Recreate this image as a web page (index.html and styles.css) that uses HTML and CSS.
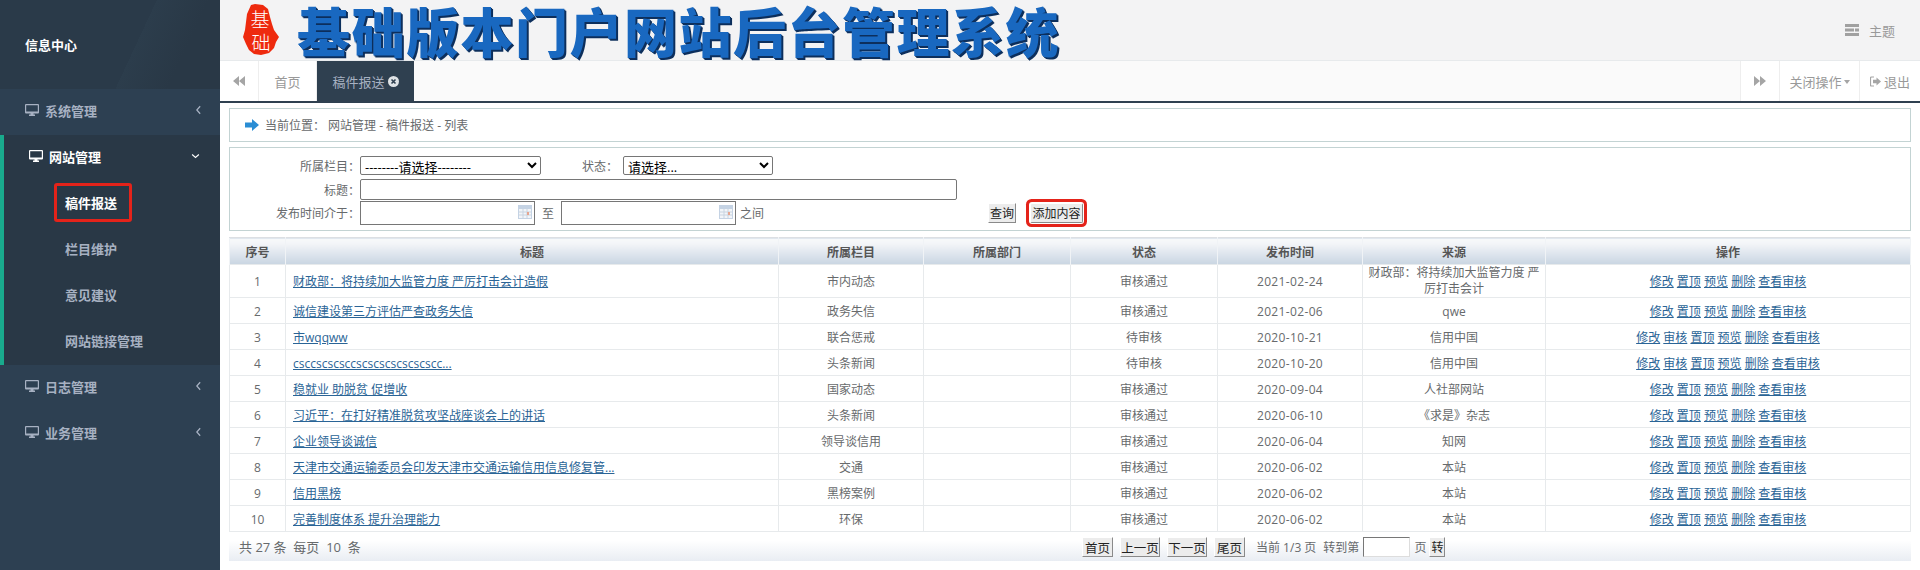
FILE: index.html
```html
<!DOCTYPE html>
<html lang="zh-CN">
<head>
    <meta charset="UTF-8">
    <title>基础版本门户网站后台管理系统</title>
    <link rel="stylesheet" href="styles.css">
</head>
<body>
    <svg class="icon-defs" width="0" height="0">
        <symbol id="monitor" viewBox="0 0 14 12">
            <path d="M1 0h12a1 1 0 0 1 1 1v7.500a1 1 0 0 1-1 1H8.500v1h1.500V12H4v-1.500h1.500v-1H1a1 1 0 0 1-1-1V1a1 1 0 0 1 1-1zm.2 1.200v6.300h11.600V1.200z"/>
        </symbol>
    </svg>

    <aside class="sidebar">
        <div class="brand">信息中心</div>
        <div class="nav-item">
            <svg class="nav-icon"><use href="#monitor"/></svg>
            <span class="nav-label">系统管理</span>
            <svg class="nav-arrow" viewBox="0 0 8 12"><path d="M6 1.500 2 6l4 4.500"/></svg>
        </div>
        <div class="nav-group">
            <div class="nav-item nav-open">
                <svg class="nav-icon"><use href="#monitor"/></svg>
                <span class="nav-label">网站管理</span>
                <svg class="nav-arrow" viewBox="0 0 12 8"><path d="M1.500 2 6 6l4.500-4"/></svg>
            </div>
            <div class="sub-item sub-current">稿件报送</div>
            <div class="sub-item">栏目维护</div>
            <div class="sub-item">意见建议</div>
            <div class="sub-item">网站链接管理</div>
        </div>
        <div class="nav-item">
            <svg class="nav-icon"><use href="#monitor"/></svg>
            <span class="nav-label">日志管理</span>
            <svg class="nav-arrow" viewBox="0 0 8 12"><path d="M6 1.500 2 6l4 4.500"/></svg>
        </div>
        <div class="nav-item">
            <svg class="nav-icon"><use href="#monitor"/></svg>
            <span class="nav-label">业务管理</span>
            <svg class="nav-arrow" viewBox="0 0 8 12"><path d="M6 1.500 2 6l4 4.500"/></svg>
        </div>
    </aside>

    <div class="main">
        <header class="top-bar">
            <svg class="seal" width="36" height="52" viewBox="0 0 36 52">
                <path class="seal-shape" d="M8 1l4-1 8 1 5 4 2 8 2 7 2 6 5 7-3 5-2 6-5 5-8 2-7-1-5-4-3-6-3-7 2-7 1-8 1-8z"/>
                <text class="seal-text" x="17" y="23">基</text>
                <text class="seal-text" x="18" y="46">础</text>
            </svg>
            <h1 class="site-title">基础版本门户网站后台管理系统</h1>
            <div class="theme-link">
                <svg width="14" height="12" viewBox="0 0 14 12"><path d="M0 0h14v3H0zM0 4.500h9v3H0zM10 4.500h4v3h-4zM0 9h14v3H0z"/></svg>
                <span>主题</span>
            </div>
        </header>

        <nav class="tab-bar">
            <div class="tab-btn tab-nav">
                <svg width="12" height="12" viewBox="0 0 12 12"><path d="M6 1v10L0 6zM12 1v10L6 6z"/></svg>
            </div>
            <div class="tab-btn tab-home">首页</div>
            <div class="tab-btn tab-active">
                稿件报送
                <svg width="11" height="11" viewBox="0 0 11 11"><circle cx="5.500" cy="5.500" r="5.500" fill="#dfe3e6"/><path d="M3.500 3.500l4 4M7.500 3.500l-4 4" stroke="#2f4050" stroke-width="1.600"/></svg>
            </div>
            <div class="tab-spacer"></div>
            <div class="tab-btn tab-nav">
                <svg width="12" height="12" viewBox="0 0 12 12"><path d="M0 1v10l6-5zM6 1v10l6-5z"/></svg>
            </div>
            <div class="tab-btn tab-close">关闭操作<i class="caret"></i></div>
            <div class="tab-btn tab-exit">
                <svg width="11" height="11" viewBox="0 0 11 11"><path d="M4 1H1.500A1 1 0 0 0 .5 2v7a1 1 0 0 0 1 1H4" fill="none" stroke="#a5a5a5" stroke-width="1.200"/><path d="M3 3.800h3.500V1.500L11 5.500l-4.500 4V7.200H3z" fill="#a5a5a5"/></svg>
                退出
            </div>
        </nav>

        <main class="content">
            <div class="crumbs">
                <svg width="14" height="12" viewBox="0 0 14 12"><path class="crumb-arrow" d="M0 3.500h7V0l7 6-7 6V8.500H0z"/></svg>
                <span class="crumb-label">当前位置：</span>
                <span>网站管理 - 稿件报送 - 列表</span>
            </div>

            <form class="search-box">
                <div class="search-row row-one">
                    <label class="search-label">所属栏目：</label>
                    <select class="select-column"><option>--------请选择--------</option></select>
                    <label class="status-label">状态：</label>
                    <select class="select-status"><option>请选择...</option></select>
                </div>
                <div class="search-row row-two">
                    <label class="search-label">标题：</label>
                    <input class="input-title" type="text">
                </div>
                <div class="search-row row-three">
                    <label class="search-label">发布时间介于：</label>
                    <span class="date-field">
                        <input class="input-date" type="text">
                        <svg class="date-icon" viewBox="0 0 14 14"><rect width="14" height="14" fill="#c5d3e4"/><path d="M1 4h12v9H1z" fill="#f2f5f9"/><path d="M1 7h12M1 10h12M5 4v9M9 4v9" stroke="#c9d4e0"/><rect x="9" y="7" width="2" height="3" fill="#e6a58f"/></svg>
                    </span>
                    <span class="date-sep">至</span>
                    <span class="date-field">
                        <input class="input-date" type="text">
                        <svg class="date-icon" viewBox="0 0 14 14"><rect width="14" height="14" fill="#c5d3e4"/><path d="M1 4h12v9H1z" fill="#f2f5f9"/><path d="M1 7h12M1 10h12M5 4v9M9 4v9" stroke="#c9d4e0"/><rect x="9" y="7" width="2" height="3" fill="#e6a58f"/></svg>
                    </span>
                    <span class="date-end">之间</span>
                    <button class="plain-btn btn-query" type="button">查询</button>
                    <button class="plain-btn btn-add" type="button">添加内容</button>
                </div>
            </form>

            <table class="list-table">
                <colgroup>
                    <col class="col-no"><col class="col-title"><col class="col-std"><col class="col-dept"><col class="col-dept"><col class="col-std"><col class="col-source"><col>
                </colgroup>
                <thead>
                    <tr><th>序号</th><th>标题</th><th>所属栏目</th><th>所属部门</th><th>状态</th><th>发布时间</th><th>来源</th><th>操作</th></tr>
                </thead>
                <tbody>
                    <tr>
                        <td>1</td><td class="cell-title"><a href="#">财政部：将持续加大监管力度 严厉打击会计造假</a></td><td>市内动态</td><td></td><td>审核通过</td><td>2021-02-24</td><td>财政部：将持续加大监管力度 严厉打击会计</td>
                        <td class="cell-ops"><a href="#">修改</a> <a href="#">置顶</a> <a href="#">预览</a> <a href="#">删除</a> <a href="#">查看审核</a></td>
                    </tr>
                    <tr>
                        <td>2</td><td class="cell-title"><a href="#">诚信建设第三方评估严查政务失信</a></td><td>政务失信</td><td></td><td>审核通过</td><td>2021-02-06</td><td>qwe</td>
                        <td class="cell-ops"><a href="#">修改</a> <a href="#">置顶</a> <a href="#">预览</a> <a href="#">删除</a> <a href="#">查看审核</a></td>
                    </tr>
                    <tr>
                        <td>3</td><td class="cell-title"><a href="#">市wqqww</a></td><td>联合惩戒</td><td></td><td>待审核</td><td>2020-10-21</td><td>信用中国</td>
                        <td class="cell-ops"><a href="#">修改</a> <a href="#">审核</a> <a href="#">置顶</a> <a href="#">预览</a> <a href="#">删除</a> <a href="#">查看审核</a></td>
                    </tr>
                    <tr>
                        <td>4</td><td class="cell-title"><a href="#">csccscscsccscscscscscscscc...</a></td><td>头条新闻</td><td></td><td>待审核</td><td>2020-10-20</td><td>信用中国</td>
                        <td class="cell-ops"><a href="#">修改</a> <a href="#">审核</a> <a href="#">置顶</a> <a href="#">预览</a> <a href="#">删除</a> <a href="#">查看审核</a></td>
                    </tr>
                    <tr>
                        <td>5</td><td class="cell-title"><a href="#">稳就业 助脱贫 促增收</a></td><td>国家动态</td><td></td><td>审核通过</td><td>2020-09-04</td><td>人社部网站</td>
                        <td class="cell-ops"><a href="#">修改</a> <a href="#">置顶</a> <a href="#">预览</a> <a href="#">删除</a> <a href="#">查看审核</a></td>
                    </tr>
                    <tr>
                        <td>6</td><td class="cell-title"><a href="#">习近平：在打好精准脱贫攻坚战座谈会上的讲话</a></td><td>头条新闻</td><td></td><td>审核通过</td><td>2020-06-10</td><td>《求是》杂志</td>
                        <td class="cell-ops"><a href="#">修改</a> <a href="#">置顶</a> <a href="#">预览</a> <a href="#">删除</a> <a href="#">查看审核</a></td>
                    </tr>
                    <tr>
                        <td>7</td><td class="cell-title"><a href="#">企业领导谈诚信</a></td><td>领导谈信用</td><td></td><td>审核通过</td><td>2020-06-04</td><td>知网</td>
                        <td class="cell-ops"><a href="#">修改</a> <a href="#">置顶</a> <a href="#">预览</a> <a href="#">删除</a> <a href="#">查看审核</a></td>
                    </tr>
                    <tr>
                        <td>8</td><td class="cell-title"><a href="#">天津市交通运输委员会印发天津市交通运输信用信息修复管...</a></td><td>交通</td><td></td><td>审核通过</td><td>2020-06-02</td><td>本站</td>
                        <td class="cell-ops"><a href="#">修改</a> <a href="#">置顶</a> <a href="#">预览</a> <a href="#">删除</a> <a href="#">查看审核</a></td>
                    </tr>
                    <tr>
                        <td>9</td><td class="cell-title"><a href="#">信用黑榜</a></td><td>黑榜案例</td><td></td><td>审核通过</td><td>2020-06-02</td><td>本站</td>
                        <td class="cell-ops"><a href="#">修改</a> <a href="#">置顶</a> <a href="#">预览</a> <a href="#">删除</a> <a href="#">查看审核</a></td>
                    </tr>
                    <tr>
                        <td>10</td><td class="cell-title"><a href="#">完善制度体系 提升治理能力</a></td><td>环保</td><td></td><td>审核通过</td><td>2020-06-02</td><td>本站</td>
                        <td class="cell-ops"><a href="#">修改</a> <a href="#">置顶</a> <a href="#">预览</a> <a href="#">删除</a> <a href="#">查看审核</a></td>
                    </tr>
                </tbody>
            </table>

            <div class="pager">
                <span class="pager-count">共 27 条 &nbsp;每页 &nbsp;10 &nbsp;条</span>
                <button class="plain-btn btn-short" type="button">首页</button>
                <button class="plain-btn btn-long" type="button">上一页</button>
                <button class="plain-btn btn-long" type="button">下一页</button>
                <button class="plain-btn btn-short" type="button">尾页</button>
                <span class="pager-now">当前 1/3 页</span>
                <span>转到第</span>
                <input class="pager-input" type="text">
                <span>页</span>
                <button class="plain-btn btn-go" type="button">转</button>
            </div>
        </main>
    </div>
</body>
</html>
```

FILE: styles.css
```css
* {
    box-sizing: border-box;
}

body {
    margin: 0;
    height: 570px;
    display: flex;
    overflow: hidden;
    background-color: #fff;
    color: #676a6c;
    font-family: "Open Sans", "Noto Sans CJK SC", sans-serif;
    font-size: 12px;
}

.icon-defs {
    display: none;
}

/* sidebar */
.sidebar {
    width: 220px;
    flex-shrink: 0;
    background-color: #2d4052;
    color: #a7b1c2;
    font-size: 13px;
}

.brand {
    height: 89px;
    padding: 0 0 1px 25px;
    display: flex;
    align-items: center;
    color: #fff;
    font-weight: bold;
    background: linear-gradient(115deg, #2a3a49 60%, #2c3d4c 60%, #293846 80%);
}

.nav-item {
    height: 46px;
    padding: 0 18px 4px 25px;
    display: flex;
    align-items: center;
    font-weight: 600;
    color: #a7b1c2;
}

.nav-icon {
    width: 14px;
    height: 12px;
    margin-right: 6px;
    fill: currentColor;
}

.nav-label {
    flex: 1;
}

.nav-arrow {
    width: 7px;
    height: 10px;
    fill: none;
    stroke: currentColor;
    stroke-width: 1.500;
}

.nav-group {
    background-color: #293846;
    border-left: 4px solid #19aa8d;
}

.nav-open {
    padding-right: 20px;
    color: #fff;
    font-weight: bold;
}

.nav-open .nav-arrow {
    width: 9px;
    height: 6px;
}

.sub-item {
    height: 46px;
    padding: 0 0 4px 61px;
    display: flex;
    align-items: center;
    font-weight: 600;
}

.sub-current {
    position: relative;
    color: #fff;
    font-weight: bold;
}

.sub-current::after {
    content: "";
    position: absolute;
    left: 50px;
    top: 2px;
    width: 72px;
    height: 33px;
    border: 3px solid #e4231a;
    border-radius: 3px;
}

/* top */
.main {
    flex: 1;
    min-width: 0;
}

.top-bar {
    height: 61px;
    padding-left: 23px;
    display: flex;
    align-items: center;
    background-color: #f3f3f4;
    border-bottom: 1px solid #e7eaec;
}

.seal {
    flex-shrink: 0;
}

.seal-shape {
    fill: #ee2a0e;
}

.seal-text {
    fill: #fff;
    font-family: "Liberation Sans", "Noto Sans CJK SC", sans-serif;
    font-size: 19px;
    font-weight: 300;
    text-anchor: middle;
}

/* latin font first keeps the line box inside the 60px bar, the glyphs still come from Noto */
.site-title {
    flex: 1;
    align-self: flex-start;
    margin: 0 0 0 18px;
    padding-top: 9px;
    color: #1968c0;
    font-family: "Liberation Sans", "Noto Sans CJK SC", sans-serif;
    font-size: 53px;
    font-weight: 900;
    line-height: 51px;
    letter-spacing: 1.500px;
    text-shadow: 1px 1px 0 #0d2f5c, 2px 2px 0 #0d2f5c;
}

.theme-link {
    padding-right: 25px;
    display: flex;
    align-items: center;
    gap: 10px;
    color: #999;
    font-size: 13px;
}

.theme-link svg {
    fill: #a0a0a0;
}

.tab-bar {
    height: 42px;
    display: flex;
    background-color: #fafafa;
    border-bottom: 2px solid #2f4050;
    color: #999;
    font-size: 13px;
}

.tab-btn {
    display: flex;
    align-items: center;
    justify-content: center;
    border-right: 1px solid #eee;
}

.tab-nav {
    width: 39px;
    background-color: #fff;
}

.tab-nav svg {
    fill: #a5a5a5;
}

.tab-home {
    width: 58px;
    background-color: #fff;
}

.tab-active {
    width: 97px;
    gap: 3px;
    background-color: #2f4050;
    border-right: none;
    color: #a7b1c2;
}

.tab-spacer {
    flex: 1;
    border-right: 1px solid #eee;
}

.tab-close {
    width: 80px;
    background-color: #fff;
}

.tab-exit {
    width: 60px;
    gap: 3px;
    background-color: #fff;
    border-right: none;
}

.caret {
    margin: 2px 0 0 2px;
    border-top: 4px solid #a5a5a5;
    border-left: 3.500px solid transparent;
    border-right: 3.500px solid transparent;
}

/* content */
.content {
    padding: 5px 9px 0;
}

.crumbs {
    height: 34px;
    padding-left: 15px;
    display: flex;
    align-items: center;
    border: 1px solid #c3d3d3;
}

.crumb-arrow {
    fill: #2a8dd4;
}

.crumb-label {
    margin: 0 3px 0 6px;
}

.search-box {
    height: 84px;
    margin-top: 5px;
    padding-top: 8px;
    border: 1px solid #c3d3d3;
}

.search-row {
    display: flex;
    align-items: center;
}

.row-one {
    height: 19px;
    margin-bottom: 4px;
}

.row-two {
    height: 21px;
    margin-bottom: 1px;
}

.row-three {
    height: 24px;
}

.search-label {
    width: 130px;
    text-align: right;
}

.status-label {
    width: 77px;
    margin-right: 5px;
    text-align: right;
}

select,
input {
    margin: 0;
    font-family: "Open Sans", "Noto Sans CJK SC", sans-serif;
    font-size: 13px;
    color: #000;
    background-color: #fff;
    border: 1px solid #767676;
    border-radius: 2px;
}

.select-column {
    width: 181px;
    height: 19px;
}

.select-status {
    width: 150px;
    height: 19px;
}

.input-title {
    width: 597px;
    height: 21px;
}

.date-field {
    position: relative;
    display: block;
}

.input-date {
    display: block;
    width: 175px;
    height: 24px;
    border-radius: 0;
}

.date-icon {
    position: absolute;
    right: 3px;
    top: 4px;
    width: 14px;
    height: 14px;
}

.date-sep {
    width: 26px;
    text-align: center;
}

.date-end {
    margin-left: 4px;
}

.plain-btn {
    height: 20px;
    margin: 0;
    padding: 0;
    white-space: nowrap;
    background-color: #ececec;
    border: 1px solid;
    border-color: #fff #8a8a8a #8a8a8a #fff;
    color: #222;
    font-family: "Open Sans", "Noto Sans CJK SC", sans-serif;
    font-size: 12px;
}

.btn-query {
    width: 28px;
    margin-left: 224px;
}

.btn-add {
    width: 53px;
    margin-left: 14px;
    box-shadow: 0 0 0 1px #fff, 0 0 0 4px #e4231a;
    border-radius: 2px;
}

/* table */
.list-table {
    width: 100%;
    margin-top: 6px;
    table-layout: fixed;
    border-collapse: collapse;
}

.col-no {
    width: 56px;
}

.col-title {
    width: 493px;
}

.col-std {
    width: 145px;
}

.col-dept {
    width: 147px;
}

.col-source {
    width: 183px;
}

.list-table th {
    height: 27px;
    padding: 2px 0 0;
    background: linear-gradient(to bottom, #f7f9fa, #f3f5f8 20%, #c9d5e2);
    border-top: 1px solid #dcdfe3;
    border-left: 1px solid #f0f3f6;
    border-right: 1px solid #f0f3f6;
    color: #555;
    font-weight: 600;
}

.list-table td {
    height: 26px;
    padding: 2px 2px 0;
    border: 1px solid #e7eaec;
    text-align: center;
    line-height: 16px;
}

.list-table tbody tr:first-child td:nth-child(7) {
    padding-top: 0;
}

/* dates run a little wider in the original font */
.list-table td:nth-child(6) {
    letter-spacing: 0.350px;
}

.list-table .cell-title {
    padding-left: 7px;
    text-align: left;
}

.list-table a {
    color: #2a6496;
    text-decoration: underline;
}

/* pager */
.pager {
    height: 29px;
    padding-left: 10px;
    display: flex;
    align-items: center;
    gap: 7px;
    background: linear-gradient(to bottom, #fff, #fff 30%, #e9edf3);
}

.pager-count {
    width: 836px;
    font-size: 13px;
}

.btn-short,
.btn-long {
    font-size: 12.500px;
}

.btn-short {
    width: 31px;
}

.btn-long {
    width: 40px;
}

.pager-now {
    margin-left: 4px;
}

.pager-input {
    width: 47px;
    height: 20px;
    margin: 0 -3px;
    border-radius: 0;
    border-color: #777 #ddd #ddd #777;
}

.btn-go {
    width: 16px;
    margin-left: -4px;
}
```
